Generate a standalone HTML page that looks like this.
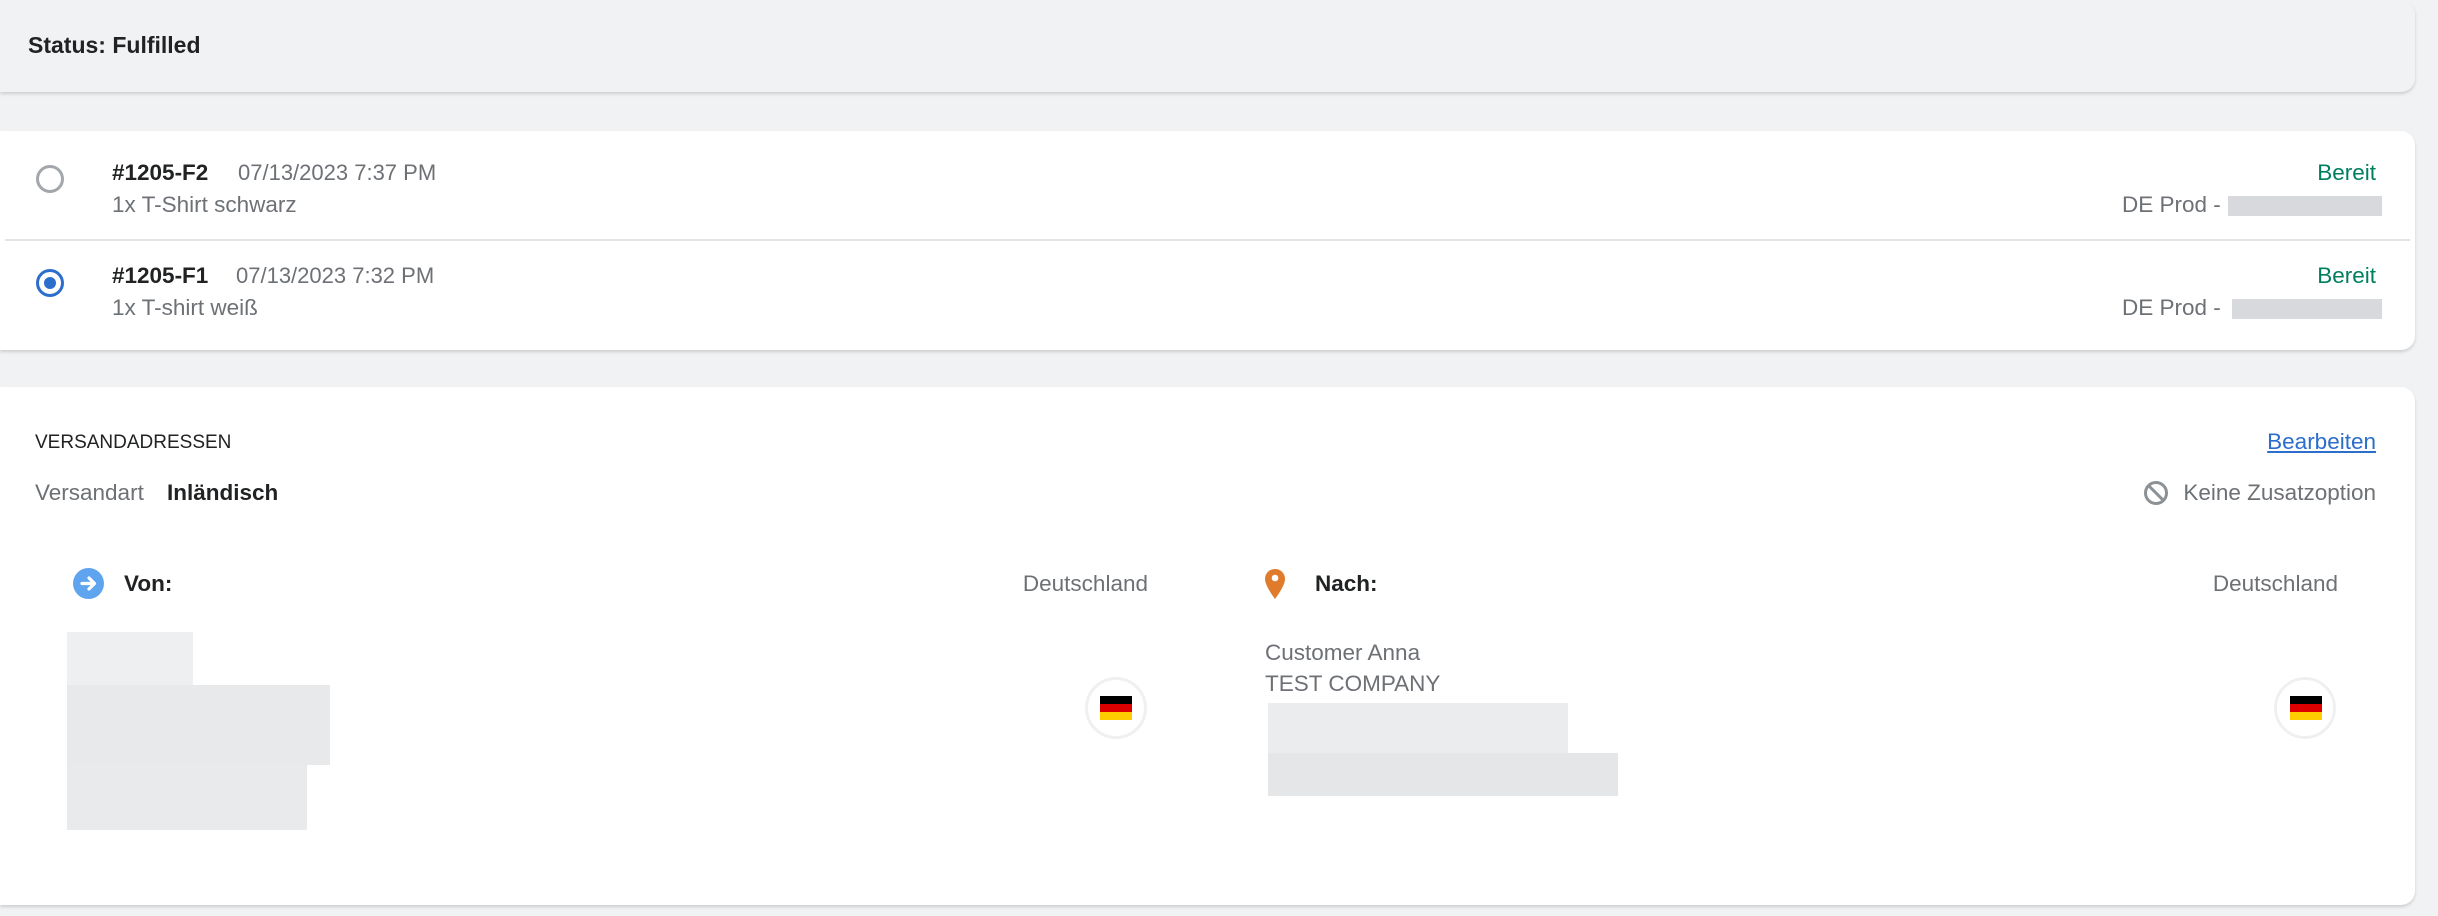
<!DOCTYPE html>
<html><head><meta charset="utf-8"><style>
*{box-sizing:border-box;margin:0;padding:0}
body{width:2438px;height:916px;background:#f1f2f4;font-family:"Liberation Sans",sans-serif;font-size:22.5px;color:#202223;position:relative;overflow:hidden}
.a{position:absolute;white-space:nowrap}
.card{position:absolute;left:0;width:2415px;border-radius:0 14px 14px 0;box-shadow:0 2px 3px rgba(0,0,0,.15)}
.g{color:#6d7175}
.b{font-weight:bold}
.blur{position:absolute;background:#e6e7e9}
</style></head><body>
<div class="card" style="top:0;height:92px;background:#f1f2f4"></div>
<div class="a b" style="left:28px;top:32px;font-size:23px">Status: Fulfilled</div>

<div class="card" style="top:131px;height:219px;background:#fff"></div>
<div class="a" style="left:5px;top:239px;width:2405px;height:2px;background:#e1e3e5"></div>
<div class="a" style="left:36px;top:165px;width:28px;height:28px;border-radius:50%;border:3px solid #a3a7ab"></div>
<div class="a" style="left:36px;top:269px;width:28px;height:28px;border-radius:50%;border:3px solid #2c6ecb"><div style="position:absolute;left:5px;top:5px;width:12px;height:12px;border-radius:50%;background:#2c6ecb"></div></div>
<div class="a b" style="left:112px;top:160px">#1205-F2</div><div class="a g" style="left:238px;top:160px;font-size:22px">07/13/2023 7:37 PM</div>
<div class="a g" style="left:112px;top:192px">1x T-Shirt schwarz</div>
<div class="a b" style="left:112px;top:263px">#1205-F1</div><div class="a g" style="left:236px;top:263px;font-size:22px">07/13/2023 7:32 PM</div>
<div class="a g" style="left:112px;top:295px">1x T-shirt weiß</div>
<div class="a" style="right:62px;top:160px;color:#007f5f">Bereit</div>
<div class="a" style="right:62px;top:263px;color:#007f5f">Bereit</div>
<div class="a g" style="left:2122px;top:192px">DE Prod -</div>
<div class="a g" style="left:2122px;top:295px">DE Prod -</div>
<div class="blur" style="left:2228px;top:196px;width:154px;height:20px;background:#d8d9dc"></div>
<div class="blur" style="left:2232px;top:299px;width:150px;height:20px;background:#d8d9dc"></div>

<div class="card" style="top:387px;height:518px;background:#fff"></div>
<div class="a" style="left:35px;top:432px;font-size:19px">VERSANDADRESSEN</div>
<div class="a" style="right:62px;top:429px;color:#2c6ecb;text-decoration:underline">Bearbeiten</div>
<div class="a g" style="left:35px;top:480px">Versandart</div>
<div class="a b" style="left:167px;top:480px">Inländisch</div>
<svg class="a" style="left:2143px;top:480px" width="26" height="26" viewBox="0 0 26 26"><circle cx="13" cy="13" r="10.5" fill="none" stroke="#8c9196" stroke-width="3"/><line x1="6" y1="6" x2="20" y2="20" stroke="#8c9196" stroke-width="3"/></svg>
<div class="a g" style="right:62px;top:480px">Keine Zusatzoption</div>

<svg class="a" style="left:73px;top:568px" width="31" height="31" viewBox="0 0 31 31"><circle cx="15.5" cy="15.5" r="15.5" fill="#5fa4ef"/><path d="M9 15.5h12M16 10l5.5 5.5L16 21" fill="none" stroke="#fff" stroke-width="3.2" stroke-linecap="round" stroke-linejoin="round"/></svg>
<div class="a b" style="left:124px;top:571px">Von:</div>
<div class="a g" style="right:1290px;top:571px">Deutschland</div>
<div class="blur" style="left:67px;top:632px;width:126px;height:60px;background:#eeeff0"></div>
<div class="blur" style="left:67px;top:685px;width:263px;height:80px;background:#e8e9eb"></div>
<div class="blur" style="left:67px;top:765px;width:240px;height:65px;background:#e9eaec"></div>
<div class="a" style="left:1085px;top:677px;width:62px;height:62px;border-radius:50%;border:3px solid #eef0f2;background:#fff"></div>
<div class="a" style="left:1100px;top:696px;width:32px;height:24px;background:linear-gradient(#000 0 33%,#d00 33% 66%,#ffce00 66%)"></div>

<svg class="a" style="left:1264px;top:568px" width="22" height="32" viewBox="0 0 22 32"><path d="M11 1C5.5 1 1 5.3 1 11c0 7 10 20 10 20s10-13 10-20C21 5.3 16.5 1 11 1z" fill="#e07b2c"/><circle cx="11" cy="10" r="3.3" fill="#fff"/></svg>
<div class="a b" style="left:1315px;top:571px">Nach:</div>
<div class="a g" style="right:100px;top:571px">Deutschland</div>
<div class="a g" style="left:1265px;top:640px">Customer Anna</div>
<div class="a g" style="left:1265px;top:671px">TEST COMPANY</div>
<div class="blur" style="left:1268px;top:703px;width:300px;height:50px;background:#ebeced"></div>
<div class="blur" style="left:1268px;top:753px;width:350px;height:43px;background:#e5e6e8"></div>
<div class="a" style="left:2274px;top:677px;width:62px;height:62px;border-radius:50%;border:3px solid #eef0f2;background:#fff"></div>
<div class="a" style="left:2290px;top:696px;width:32px;height:24px;background:linear-gradient(#000 0 33%,#d00 33% 66%,#ffce00 66%)"></div>
</body></html>
